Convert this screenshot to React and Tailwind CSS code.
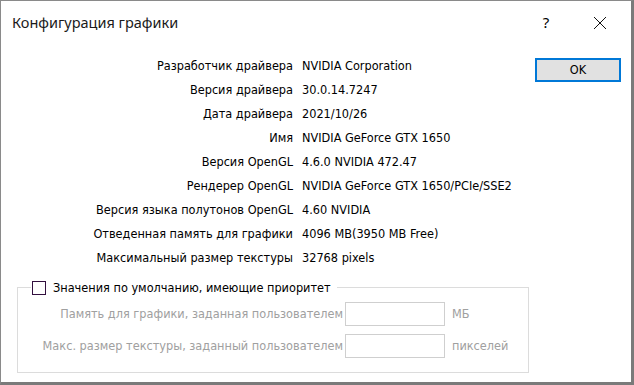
import React from 'react';

const rows = [
  ['Разработчик драйвера', 'NVIDIA Corporation'],
  ['Версия драйвера', '30.0.14.7247'],
  ['Дата драйвера', '2021/10/26'],
  ['Имя', 'NVIDIA GeForce GTX 1650'],
  ['Версия OpenGL', '4.6.0 NVIDIA 472.47'],
  ['Рендерер OpenGL', 'NVIDIA GeForce GTX 1650/PCIe/SSE2'],
  ['Версия языка полутонов OpenGL', '4.60 NVIDIA'],
  ['Отведенная память для графики', '4096 MB(3950 MB Free)'],
  ['Максимальный размер текстуры', '32768 pixels'],
];

const ui = { fontFamily: '"DejaVu Sans Condensed", "DejaVu Sans", sans-serif' };

export default function App() {
  return (
    <div className="w-[634px] h-[385px] bg-white border border-[#8a8a8a] border-r-[3px] border-b-[3px] border-r-[#7a7a7a] border-b-[#7a7a7a] flex flex-col text-black" style={ui}>
      {/* Заголовок */}
      <div className="h-[43px] flex items-center pl-[11px] shrink-0">
        <span className="text-[14.5px] text-[#1a1a1a]" style={{ fontFamily: '"Noto Sans", sans-serif' }}>Конфигурация графики</span>
        <span className="ml-auto w-[18px] text-center text-[15px]" style={{ fontFamily: '"Noto Sans", sans-serif' }}>?</span>
        <svg className="ml-[38px] mr-[24px]" width="14" height="14" viewBox="0 0 14 14">
          <path d="M1 1 L13 13 M13 1 L1 13" stroke="#111" strokeWidth="1" />
        </svg>
      </div>

      <div className="flex flex-1">
        <div className="flex-1 flex flex-col pt-[10px]">
          <div className="grid grid-cols-[292px_1fr] gap-x-[9px] text-[12.6px]">
            {rows.map(([k, v]) => (
              <React.Fragment key={k}>
                <div className="h-[24px] flex items-center justify-end whitespace-nowrap">{k}</div>
                <div className="h-[24px] flex items-center whitespace-nowrap">{v}</div>
              </React.Fragment>
            ))}
          </div>

          {/* Группа */}
          <div className="relative ml-[16px] mt-[17px] w-[512px] h-[86px] border border-[#dcdcdc]">
            <div className="absolute -top-[9px] left-[13px] flex items-center gap-[7px] bg-white pr-[6px] pl-[1px] text-[12.6px]">
              <div className="w-[14px] h-[14px] border border-[#33103f] bg-white" />
              <span>Значения по умолчанию, имеющие приоритет</span>
            </div>
            <div className="flex flex-col gap-[8px] pt-[14px] text-[12.6px] text-[#a0a0a0]">
              <div className="flex items-center">
                <span className="w-[327px] text-right whitespace-nowrap pr-[2px]">Память для графики, заданная пользователем</span>
                <div className="w-[100px] h-[24px] border border-[#cfcfcf] bg-white" />
                <span className="ml-[7px]">МБ</span>
              </div>
              <div className="flex items-center">
                <span className="w-[327px] text-right whitespace-nowrap pr-[2px]">Макс. размер текстуры, заданный пользователем</span>
                <div className="w-[100px] h-[24px] border border-[#cfcfcf] bg-white" />
                <span className="ml-[7px]">пикселей</span>
              </div>
            </div>
          </div>
        </div>

        <div className="w-[96px] shrink-0 pt-[14px]">
          <button className="w-[86px] h-[24px] border-2 border-[#0078d7] bg-[#e1e1e1] text-[12.6px] flex items-center justify-center">OK</button>
        </div>
      </div>
    </div>
  );
}
